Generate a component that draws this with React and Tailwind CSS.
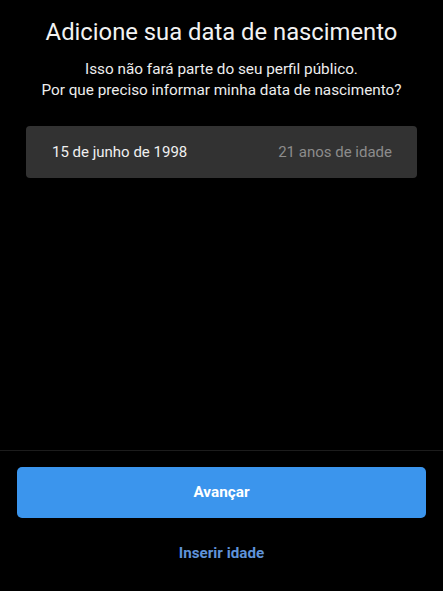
export default function App() {
  return (
    <div className="w-[443px] h-[591px] bg-black flex flex-col text-white" style={{ fontFamily: 'Roboto, "Liberation Sans", sans-serif' }}>
      <div className="flex-1 flex flex-col items-center">
        <h1 className="mt-[16px] text-[23.8px] leading-[32px] text-[#f2f2f2]">Adicione sua data de nascimento</h1>
        <p className="mt-[11px] text-[15.3px] leading-[21px] text-center text-[#ededed]">
          Isso não fará parte do seu perfil público.
          <br />
          Por que preciso informar minha data de nascimento?
        </p>
        <div className="mt-[25px] w-[391px] h-[52px] rounded-[4px] bg-[#323232] flex items-center justify-between pl-[26px] pr-[25px]">
          <span className="text-[15px] text-[#f0f0f0]">15 de junho de 1998</span>
          <span className="text-[15px] text-[#8c8c8c]">21 anos de idade</span>
        </div>
      </div>
      <div className="h-px bg-[#1c1c1c]" />
      <div className="flex flex-col items-center pt-[16px] pb-[26px]">
        <button className="w-[409px] h-[51px] rounded-[5px] bg-[#3b95ed] text-white font-bold text-[15.3px]">Avançar</button>
        <span className="mt-[24px] text-[15.2px] font-bold text-[#5f92d8]">Inserir idade</span>
      </div>
    </div>
  );
}
